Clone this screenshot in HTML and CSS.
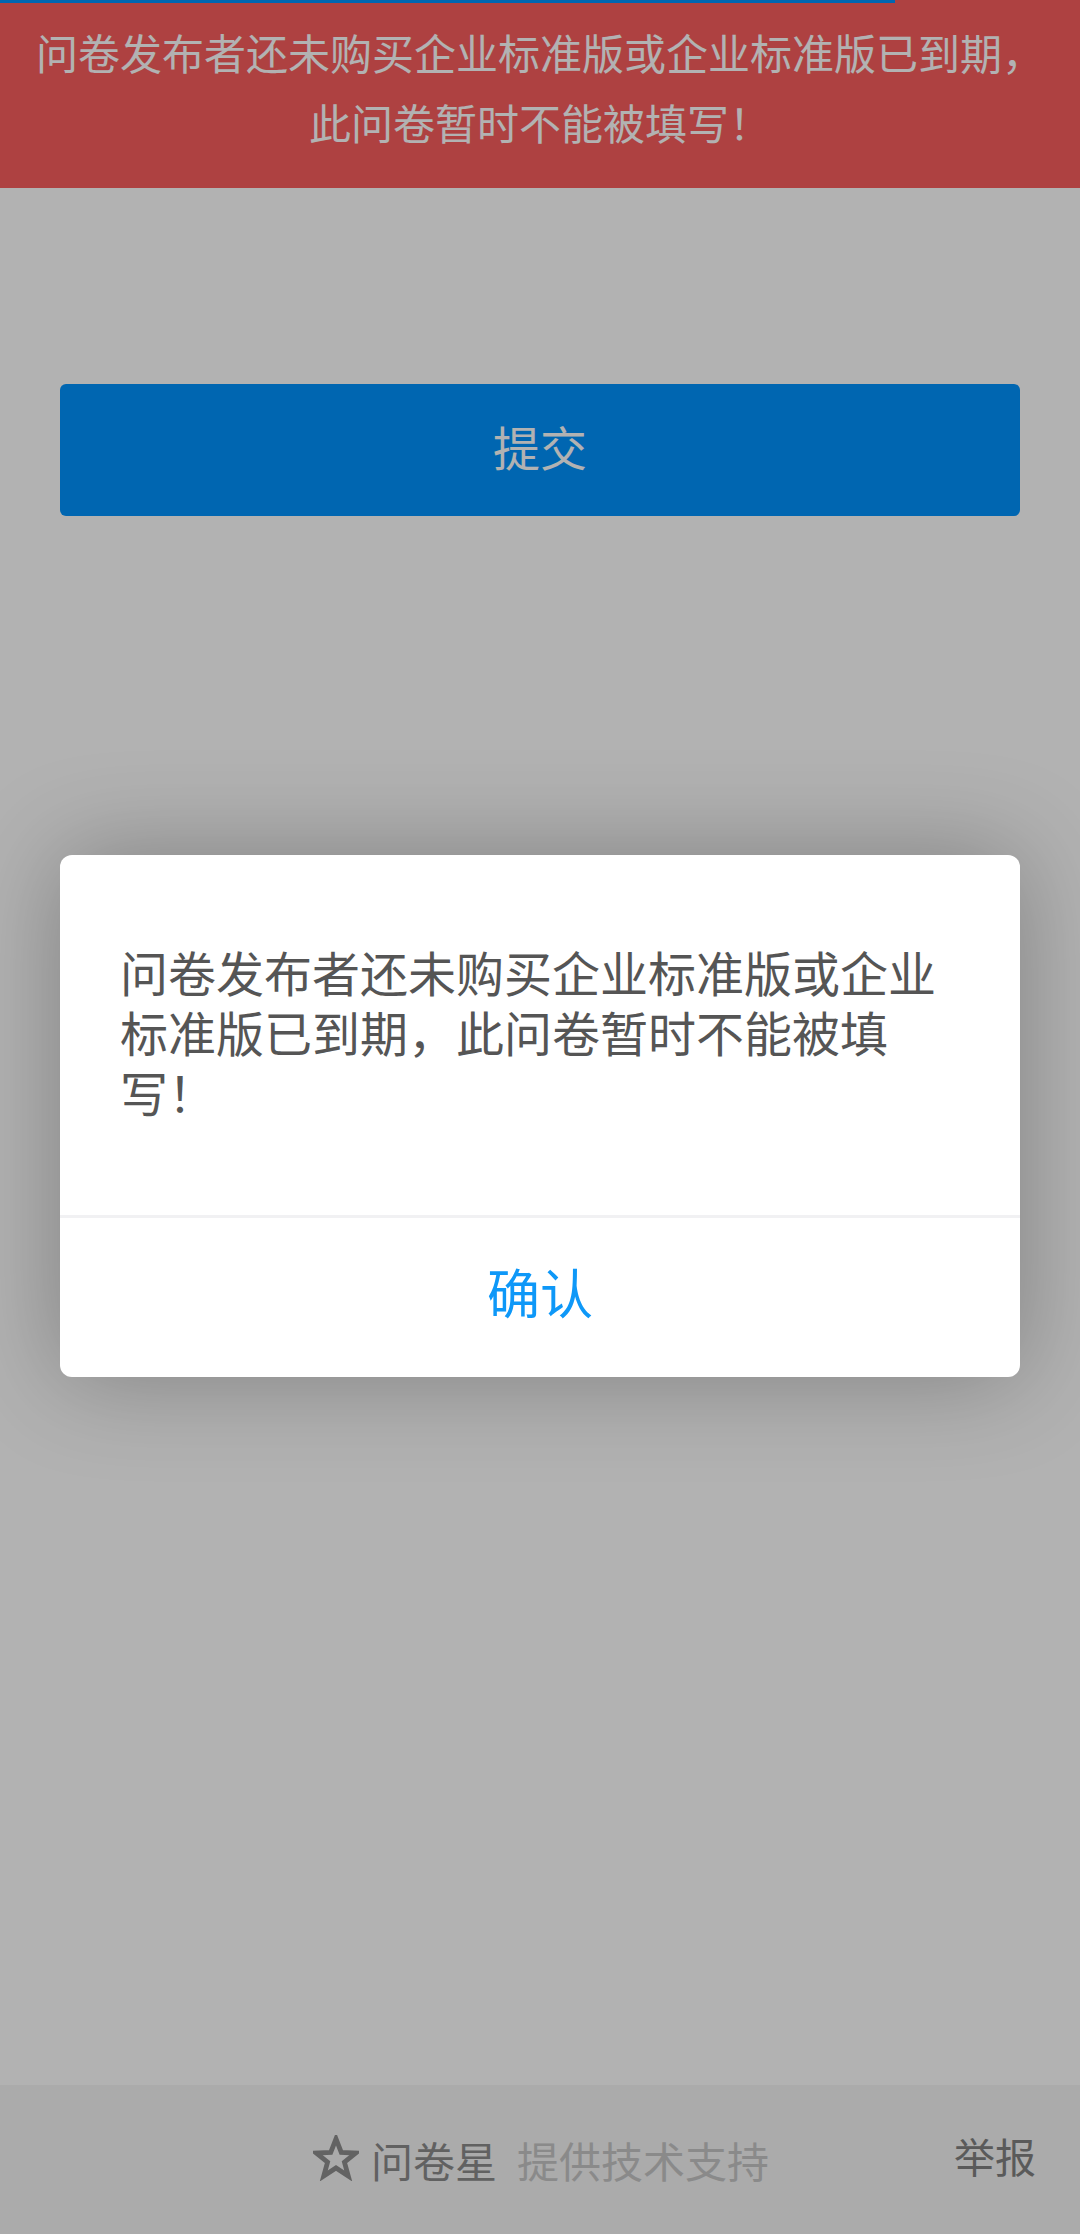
FILE: index.html
```html
<!DOCTYPE html>
<html lang="zh-CN">
<head>
<meta charset="utf-8">
<title>问卷星</title>
<link rel="stylesheet" href="styles.css">
</head>
<body>
<div class="page">
  <div class="progress"><div class="progress-fill"></div></div>
  <div class="banner">问卷发布者还未购买企业标准版或企业标准版已到期，<br>此问卷暂时不能被填写！</div>
  <div class="main">
    <div class="submit">提交</div>
  </div>
  <div class="footer">
    <div class="brand">
      <svg class="star" viewBox="0 0 48 48" width="46" height="46"><path d="M24 4 L29.5 18.2 L44.5 18.8 L32.8 28.2 L36.8 42.8 L24 34.4 L11.2 42.8 L15.2 28.2 L3.5 18.8 L18.5 18.2 Z" fill="none" stroke="#8e8e8e" stroke-width="5" stroke-linejoin="miter"/></svg>
      <span class="brand-name">问卷星</span>
      <span class="brand-sub">提供技术支持</span>
    </div>
    <span class="report">举报</span>
  </div>
</div>
<div class="mask"></div>
<div class="dialog">
  <div class="dialog-body">问卷发布者还未购买企业标准版或企业标准版已到期，此问卷暂时不能被填写！</div>
  <div class="dialog-btn">确认</div>
</div>
</body>
</html>
```
FILE: styles.css
```css
* { box-sizing: border-box; }
html, body { margin: 0; padding: 0; }
body {
  width: 1080px;
  height: 2234px;
  background: #ffffff;
  font-family: "Noto Sans CJK SC", "Noto Sans", sans-serif;
  overflow: hidden;
  position: relative;
}
.page {
  height: 2234px;
  display: flex;
  flex-direction: column;
}
.progress {
  height: 3px;
  background: #f95d5d;
}
.progress-fill {
  width: 895px;
  height: 3px;
  background: #0092fe;
}
.banner {
  background: #f95d5d;
  color: #ffffff;
  font-size: 42px;
  line-height: 70px;
  text-align: center;
  padding: 14px 0 31px;
  height: 185px;
}
.main {
  flex: 1;
  padding: 196px 60px 0;
}
.submit {
  height: 132px;
  background: #0092fe;
  border-radius: 6px;
  color: #ffffff;
  font-size: 47px;
  padding-bottom: 10px;
  display: flex;
  align-items: center;
  justify-content: center;
}
.footer {
  height: 149px;
  background: #f5f5f5;
  display: flex;
  align-items: center;
  justify-content: center;
  position: relative;
}
.brand {
  display: flex;
  align-items: center;
  font-size: 42px;
  margin-left: 2px;
}
.star { display: block; margin-top: -4px; margin-right: 12px; }
.brand-name { color: #8c8c8c; margin-right: 20px; }
.brand-sub { color: #c6c6c6; }
.report {
  position: absolute;
  right: 44px;
  top: 50%;
  transform: translateY(-58%);
  font-size: 41px;
  color: #828282;
}
.mask {
  position: absolute;
  inset: 0;
  background: rgba(0, 0, 0, 0.3);
}
.dialog {
  position: absolute;
  left: 60px;
  top: 855px;
  width: 960px;
  background: #ffffff;
  border-radius: 12px;
  box-shadow: 0 0 100px rgba(0, 0, 0, 0.28);
  overflow: hidden;
}
.dialog-body {
  padding: 86px 60px 92px;
  font-size: 48px;
  line-height: 60px;
  color: #555555;
  min-height: 360px;
}
.dialog-btn {
  border-top: 3px solid #f1f1f3;
  height: 162px;
  padding-bottom: 14px;
  display: flex;
  align-items: center;
  justify-content: center;
  font-size: 53px;
  color: #0e98f8;
}
```
